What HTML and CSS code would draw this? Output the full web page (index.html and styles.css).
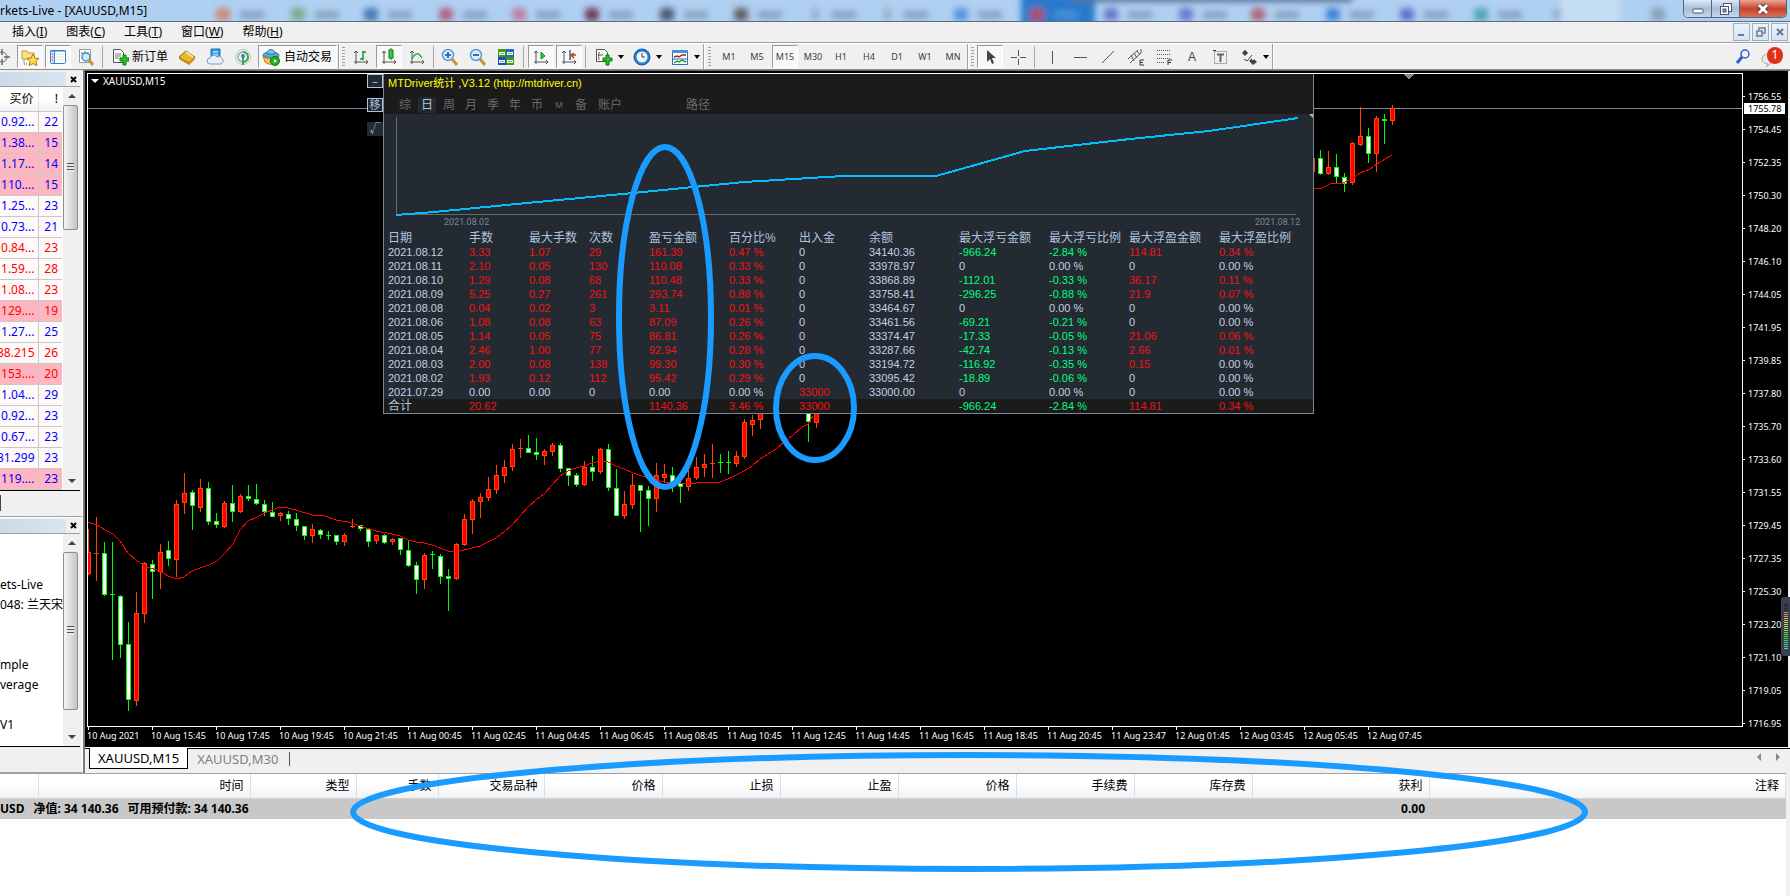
FILE: index.html
```html
<!DOCTYPE html>
<html lang="zh-CN">
<head>
<meta charset="utf-8">
<title>Markets-Live - [XAUUSD,M15]</title>
<link rel="stylesheet" href="styles.css">
</head>
<body>
<header class="titlebar">
  <svg class="glass" aria-hidden="true">
    <defs>
      <filter id="soft" x="-20%" y="-40%" width="140%" height="180%"><feGaussianBlur stdDeviation="3"/></filter>
    </defs>
    <g id="glass-tabs" filter="url(#soft)"></g>
  </svg>
  <h1 class="title">rkets-Live - [XAUUSD,M15]</h1>
  <div class="window-buttons">
    <button class="wb" aria-label="最小化"><svg width="12" height="12"><rect x="1" y="6" width="10" height="4" rx="1" fill="#fff" stroke="#4a5670"/></svg></button>
    <button class="wb" aria-label="还原"><svg width="14" height="14"><rect x="4.500" y="1.500" width="8" height="8" fill="#fff" stroke="#4a5670"/><rect x="1.500" y="4.500" width="8" height="8" fill="#fff" stroke="#4a5670"/><rect x="4" y="7" width="3" height="3" fill="#8ea4c0" stroke="#4a5670"/></svg></button>
    <button class="wb wb-close" aria-label="关闭"><svg width="14" height="12"><path d="M3 2l8 8M11 2l-8 8" stroke="#5b3434" stroke-width="5"/><path d="M3 2l8 8M11 2l-8 8" stroke="#fff" stroke-width="3"/></svg></button>
  </div>
</header>

<nav class="menubar">
  <a href="#insert">插入(<u>I</u>)</a>
  <a href="#charts">图表(<u>C</u>)</a>
  <a href="#tools">工具(<u>T</u>)</a>
  <a href="#window">窗口(<u>W</u>)</a>
  <a href="#help">帮助(<u>H</u>)</a>
  <div class="mdi-buttons">
    <button aria-label="最小化图表"><svg width="12" height="12"><path d="M2 9h6" stroke="#6d7b8c" stroke-width="2"/></svg></button>
    <button aria-label="还原图表"><svg width="12" height="12"><path d="M4 4V2h6v5H8M2 5h5v5H2z" fill="none" stroke="#6d7b8c" stroke-width="1.500"/></svg></button>
    <button aria-label="关闭图表"><svg width="12" height="12"><path d="M3 3l6 6M9 3l-6 6" stroke="#6d7b8c" stroke-width="2"/></svg></button>
  </div>
</nav>

<div class="toolbar" role="toolbar">
  <div class="group group-first">
    <button class="tb" aria-label="准星"><svg width="18" height="18" fill="none" stroke="#666"><circle cx="9" cy="9" r="5"/><path d="M9 1v6M9 11v6M1 9h6M11 9h6" stroke-width="1.500"/></svg></button>
    <button class="tb on" aria-label="市场报价"><svg width="18" height="18"><path d="M1 3h5l1 2h6v6H1z" fill="#fbe08a" stroke="#c79a2c"/><path d="M3 12v4h4" fill="none" stroke="#555" stroke-dasharray="1 1"/><path d="M12 6l2 4 4 .5-3 3 .8 4L12 15.500 8.200 17.500l.8-4-3-3 4-.5z" fill="#ffd84a" stroke="#a97a12"/></svg></button>
    <button class="tb on" aria-label="导航"><svg width="18" height="18"><rect x="1.500" y="2.500" width="15" height="13" rx="1" fill="#fff" stroke="#3c7cc8"/><path d="M2 3h3v12H2z" fill="#cfe2f6"/><path d="M5.500 3v12M1 3h16" stroke="#3c7cc8"/><path d="M3 6h1M3 9h1M3 12h1" stroke="#d22"/><path d="M7 6h8M7 9h8M7 12h8" stroke="#dbe4ef"/></svg></button>
    <button class="tb" aria-label="数据窗口"><svg width="18" height="18"><path d="M2.500 1.500h11v13h-11z" fill="#fff" stroke="#999"/><path d="M4 5h2v4M8 3v5M11 4v4" fill="none" stroke="#567"/><circle cx="9" cy="9" r="4" fill="#cfe8fa" stroke="#4b8fc8" stroke-width="1.500"/><path d="M12 12l4 5" stroke="#c8962a" stroke-width="3"/></svg></button>
  </div>
  <span class="sep"></span>
  <div class="group">
    <button class="tb tb-order"><svg width="18" height="18"><path d="M2.500 1.500h7l3 3v10h-10z" fill="#fff" stroke="#555"/><path d="M4 6h6M4 8h6M4 10h4" stroke="#777"/><path d="M9 10h3V7h3v3h3v3h-3v4h-3v-4H9z" fill="#22c322" stroke="#0a7d0a"/></svg><span>新订单</span></button>
    <button class="tb" aria-label="MetaEditor"><svg width="18" height="18"><path d="M1 9l7-6 9 6-6 7z" fill="#e9b735" stroke="#9a6c0c"/><path d="M1 9l10 5 6-5v2l-6 6-10-6z" fill="#c68a15"/><path d="M8 4l7 5" stroke="#fbe39a" stroke-width="2"/></svg></button>
    <button class="tb" aria-label="虚拟主机"><svg width="18" height="18"><path d="M5 1h9v9H5z" fill="#2e9be2" stroke="#1674b8"/><path d="M7 4h5M7 7h5" stroke="#fff"/><path d="M4 16a3 3 0 010-6 4 4 0 017-1 3.500 3.500 0 014 7z" fill="#e8eff8" stroke="#7f9cc4"/></svg></button>
    <button class="tb" aria-label="信号"><svg width="18" height="18" fill="none"><circle cx="9" cy="9" r="7.500" stroke="#b7c9bb"/><circle cx="9" cy="9" r="5" stroke="#86b294" stroke-width="1.500"/><path d="M9 4a5 5 0 010 10" stroke="#3aa655" stroke-width="2"/><circle cx="9" cy="8" r="2" fill="#3e7ec0"/><path d="M9 9v8" stroke="#3aa655" stroke-width="2"/></svg></button>
    <button class="tb on tb-auto"><svg width="18" height="18"><path d="M1 8c3 3 13 3 16 0l-2 6c-3 3-9 3-12 0z" fill="#f1c64a" stroke="#b4861a"/><ellipse cx="9" cy="7" rx="8" ry="3" fill="#56a9d6" stroke="#2d7dad"/><path d="M5 6c0-6 8-6 8 0z" fill="#7cc3e8" stroke="#2d7dad"/><circle cx="13" cy="13" r="4.500" fill="#25b022" stroke="#0c780c"/><path d="M12 11l3 2-3 2z" fill="#fff"/></svg><span>自动交易</span></button>
  </div>
  <span class="edge"></span><span class="grip"></span>
  <div class="group">
    <button class="tb" aria-label="柱状图"><svg width="18" height="18" fill="none" stroke="#555"><path d="M4 3v13M2 5l2-2 2 2M2 14h14M14 12l2 2-2 2"/><path d="M11 3v9M11 4h3M8 11h3" stroke="#0a9a2a" stroke-width="1.500"/></svg></button>
    <button class="tb on" aria-label="阴阳烛"><svg width="18" height="18" fill="none" stroke="#555"><path d="M4 3v13M2 5l2-2 2 2M2 14h14M14 12l2 2-2 2"/><path d="M11 0v12" stroke="#0a7a1a"/><rect x="9" y="2" width="4" height="8" fill="#2fd04a" stroke="#0a7a1a"/></svg></button>
    <button class="tb" aria-label="折线图"><svg width="18" height="18" fill="none" stroke="#555"><path d="M4 3v13M2 5l2-2 2 2M2 14h14M14 12l2 2-2 2"/><path d="M4 11q5-10 10-1" stroke="#3aaa4a" stroke-width="1.500"/></svg></button>
  </div>
  <span class="sep sep-s"></span>
  <div class="group">
    <button class="tb" aria-label="放大"><svg width="18" height="18"><path d="M11 11l5 6" stroke="#c8962a" stroke-width="3"/><circle cx="7" cy="7" r="5.500" fill="#d9eefc" stroke="#5a9cd4" stroke-width="1.500"/><path d="M4 7h6M7 4v6" stroke="#3c6ea8" stroke-width="2"/></svg></button>
    <button class="tb" aria-label="缩小"><svg width="18" height="18"><path d="M11 11l5 6" stroke="#c8962a" stroke-width="3"/><circle cx="7" cy="7" r="5.500" fill="#d9eefc" stroke="#5a9cd4" stroke-width="1.500"/><path d="M4 7h6" stroke="#3c6ea8" stroke-width="2"/></svg></button>
    <button class="tb" aria-label="平铺"><svg width="18" height="18"><path d="M1 1h8v8H1z" fill="#3c9a1c"/><path d="M9 1h8v8H9z" fill="#2c62c4"/><path d="M1 9h8v8H1z" fill="#1c4cc0"/><path d="M9 9h8v8H9z" fill="#3c9a1c"/><path d="M2 4h6v3H2zM10 4h6v3h-6zM2 12h6v3H2zM10 12h6v3h-6z" fill="#eef6e8"/><path d="M3 5.500h4M11 5.500h4M3 13.500h4M11 13.500h4" stroke="#8ab86a"/></svg></button>
  </div>
  <span class="sep sep-l"></span>
  <div class="group">
    <button class="tb on" aria-label="自动滚动"><svg width="18" height="18" fill="none" stroke="#555"><path d="M4 3v13M2 5l2-2 2 2M2 14h14M14 12l2 2-2 2"/><path d="M9 4l4 4-4 3z" fill="#2fd04a" stroke="#0a8a1a"/></svg></button>
    <button class="tb on" aria-label="图表平移"><svg width="18" height="18" fill="none" stroke="#555"><path d="M4 3v13M2 5l2-2 2 2M2 14h14M14 12l2 2-2 2"/><path d="M10 2v10" stroke="#2a62a8" stroke-width="1.500"/><path d="M16 7h-5M14 5l-3 2 3 3" stroke="#c83a10" stroke-width="1.500"/></svg></button>
  </div>
  <span class="sep"></span>
  <div class="group">
    <button class="tb tb-drop" aria-label="指标"><svg width="18" height="18"><path d="M1.500 1.500h8l3 3v9h-11z" fill="#fff" stroke="#555"/><path d="M5 4q-2 0-1 8M3 7h5" fill="none" stroke="#555"/><path d="M8 10h3V7h3v3h3v3h-3v4h-3v-4H8z" fill="#22c322" stroke="#0a7d0a"/></svg><i class="caret"></i></button>
    <button class="tb tb-drop" aria-label="周期"><svg width="18" height="18"><circle cx="9" cy="9" r="8" fill="#2c7fd6" stroke="#1450a0"/><circle cx="9" cy="9" r="5.500" fill="#eef6fc"/><path d="M9 5v4h3" fill="none" stroke="#444"/></svg><i class="caret"></i></button>
    <button class="tb tb-drop" aria-label="模板"><svg width="18" height="18"><path d="M1.500 2.500h15v14h-15z" fill="#fff" stroke="#2c6fc0"/><path d="M1 2h16v3H1z" fill="#4a90d8"/><path d="M3 9l3-1 2 1 3-2 4 0" fill="none" stroke="#b02010" stroke-width="1.500"/><path d="M1 11h16" stroke="#2c6fc0"/><path d="M3 15l3-2 2 1 3-2 4 2" fill="none" stroke="#1a9a2a" stroke-width="1.500"/></svg><i class="caret"></i></button>
  </div>
  <span class="edge"></span><span class="grip grip-l"></span>
  <div class="group frames">
    <button class="tb">M1</button><button class="tb">M5</button><button class="tb on">M15</button><button class="tb">M30</button><button class="tb">H1</button><button class="tb">H4</button><button class="tb">D1</button><button class="tb">W1</button><button class="tb">MN</button>
  </div>
  <span class="edge"></span><span class="grip"></span>
  <div class="group">
    <button class="tb on" aria-label="光标"><svg width="18" height="18"><path d="M6 2v12l3-3 2 5 2-1-2-5h4z" fill="#444"/></svg></button>
    <button class="tb" aria-label="十字线"><svg width="18" height="18" stroke="#555"><path d="M9.500 2v6M9.500 11v6M2 9.500h6M11 9.500h6"/></svg></button>
  </div>
  <span class="sep"></span>
  <div class="group">
    <button class="tb" aria-label="垂直线"><svg width="18" height="18" stroke="#555"><path d="M9.500 3v13"/></svg></button>
    <button class="tb" aria-label="水平线"><svg width="18" height="18" stroke="#555"><path d="M3 9.500h13"/></svg></button>
    <button class="tb" aria-label="趋势线"><svg width="18" height="18" stroke="#555"><path d="M3 15L15 3"/></svg></button>
    <button class="tb" aria-label="等距通道"><svg width="18" height="18" fill="none" stroke="#555"><path d="M1 11L11 2M3 15L14 5M4 7l3 6M7 5l3 5M10 3l3 4M14 1v4"/><path d="M17 12h-4v5h4M13 14.500h3" stroke="#333"/></svg></button>
    <button class="tb" aria-label="斐波纳契"><svg width="18" height="18" fill="none" stroke="#555"><path d="M2 2.500h14M2 6.500h14M2 10.500h14M2 14.500h8" stroke-dasharray="1 1"/><path d="M13 17v-5h4M13 14.500h3" stroke="#333"/></svg></button>
    <button class="tb tb-letter" aria-label="文字">A</button>
    <button class="tb" aria-label="文字标签"><svg width="18" height="18" fill="none" stroke="#666"><path d="M3.500 3.500h12v12h-12z" stroke-dasharray="1 1"/><path d="M2 2.500h3" stroke="#333"/><path d="M6 6.500h7M9.500 6v8" stroke-width="2"/></svg></button>
    <button class="tb tb-drop" aria-label="箭头"><svg width="18" height="18" fill="#444"><path d="M5 2l3 3-2 0v2H4V5H2z"/><path d="M2 5l3-3 3 3-3 3z"/><path d="M9 13l3-3v2h2v-1l3 3-4 3z"/><path d="M4 11l3 2 5-6" fill="none" stroke="#444"/></svg><i class="caret"></i></button>
  </div>
  <span class="edge"></span>
  <div class="toolbar-right">
    <button class="tb" aria-label="搜索"><svg width="18" height="18" fill="none" stroke="#2a5fd0"><circle cx="10" cy="6" r="4" stroke-width="1.500"/><path d="M7 9l-5 6" stroke-width="3"/></svg></button>
    <button class="tb tb-bell" aria-label="消息"><svg width="18" height="20"><path d="M8 7a6 5 0 100 10l-2 3 5-4a5 5 0 00-3-9z" fill="#e9e9ee" stroke="#aaa"/></svg><span class="badge">1</span></button>
  </div>
</div>

<main class="workspace">
  <aside class="dock">
    <section class="market">
      <div class="dock-head"><span class="dock-title"></span><button class="dock-close" aria-label="关闭"><svg width="7" height="7"><path d="M1 1l5 5M6 1L1 6" stroke="#000" stroke-width="2"/></svg></button></div>
      <div class="dock-body">
        <table class="quotes">
          <colgroup><col class="q-price"><col class="q-spread"></colgroup>
          <thead><tr><th>买价</th><th>!</th></tr></thead>
          <tbody>
            <tr><td><span>0.92...</span></td><td>22</td></tr>
            <tr class="hot"><td><span>1.38...</span></td><td>15</td></tr>
            <tr class="hot"><td><span>1.17...</span></td><td>14</td></tr>
            <tr class="hot"><td><span>110....</span></td><td>15</td></tr>
            <tr><td><span>1.25...</span></td><td>23</td></tr>
            <tr><td><span>0.73...</span></td><td>21</td></tr>
            <tr class="fall"><td><span>0.84...</span></td><td>23</td></tr>
            <tr class="fall"><td><span>1.59...</span></td><td>28</td></tr>
            <tr class="fall"><td><span>1.08...</span></td><td>23</td></tr>
            <tr class="fall hot"><td><span>129....</span></td><td>19</td></tr>
            <tr><td><span>1.27...</span></td><td>25</td></tr>
            <tr class="fall"><td><span>38.215</span></td><td>26</td></tr>
            <tr class="fall hot"><td><span>153....</span></td><td>20</td></tr>
            <tr><td><span>1.04...</span></td><td>29</td></tr>
            <tr><td><span>0.92...</span></td><td>23</td></tr>
            <tr><td><span>0.67...</span></td><td>23</td></tr>
            <tr><td><span>31.299</span></td><td>23</td></tr>
            <tr class="hot"><td><span>119....</span></td><td>23</td></tr>
          </tbody>
        </table>
        <div class="scroll"><button class="up" aria-label="向上"></button><div class="track track-a"><div class="thumb"></div></div><button class="down" aria-label="向下"></button></div>
      </div>
      <div class="dock-tabs"><span class="dock-tab"></span></div>
    </section>
    <section class="navigator">
      <div class="dock-head"><span class="dock-title"></span><button class="dock-close" aria-label="关闭"><svg width="7" height="7"><path d="M1 1l5 5M6 1L1 6" stroke="#000" stroke-width="2"/></svg></button></div>
      <div class="dock-body">
        <ul class="tree">
          <li></li><li></li><li>ets-Live</li><li>048: 兰天宋</li><li></li><li></li><li>mple</li><li>verage</li><li></li><li>V1</li>
        </ul>
        <div class="scroll"><button class="up" aria-label="向上"></button><div class="track track-b"><div class="thumb"></div></div><button class="down" aria-label="向下"></button></div>
      </div>
      <div class="dock-tabs"></div>
    </section>
  </aside>

  <section class="charts">
    <div class="chart-window">
      <div class="plot">
        <svg class="candles"><path class="bid-line" d="M0 34.500h4000"/><g id="bars"></g><path class="shift-mark" d="M1316 0h10l-5 6z"/><g id="average"></g></svg>
        <div class="chart-name"><i class="caret caret-w"></i>XAUUSD,M15</div>

        <div class="side-buttons">
          <button class="framed" aria-label="折叠">–</button>
          <button class="framed">移</button>
          <button>√</button>
        </div>
        <div class="stats">
          <div class="stats-head">
            <div class="stats-title">MTDriver统计 ,V3.12 (http://mtdriver.cn)</div>
            <div class="stats-tabs">
              <button>综</button><button class="sel">日</button><button>周</button><button>月</button><button>季</button><button>年</button><button>币</button><button class="mini">M</button><button>备</button><button class="wide">账户</button><button class="wide path">路径</button>
            </div>
          </div>
          <svg class="equity">
            <path d="M12.500 3v97M12 100.500h900" stroke="#696969" fill="none"/>
            <path d="M12 101L50 98 143 89 249 79 360 68 459 62H552L641 37 746 25 825 17 914 4" stroke="#00bfff" stroke-width="2" fill="none" shape-rendering="crispEdges"/>
            <path d="M929 0l-4 0 4 4z" fill="#b8b8b8"/>
            <text x="60" y="111">2021.08.02</text><text x="871" y="111">2021.08.12</text>
          </svg>
          <table class="days">
            <colgroup><col class="w84"><col class="w60"><col class="w60"><col class="w60"><col class="w80"><col class="w70"><col class="w70"><col class="w90"><col class="w90"><col class="w80"><col class="w90"><col></colgroup>
            <thead><tr><th>日期</th><th>手数</th><th>最大手数</th><th>次数</th><th>盈亏金额</th><th>百分比%</th><th>出入金</th><th>余额</th><th>最大浮亏金额</th><th>最大浮亏比例</th><th>最大浮盈金额</th><th>最大浮盈比例</th></tr></thead>
            <tbody>
              <tr><td>2021.08.12</td><td class="r">3.33</td><td class="r">1.07</td><td class="r">29</td><td class="r">161.39</td><td class="r">0.47 %</td><td>0</td><td>34140.36</td><td class="g">-966.24</td><td class="g">-2.84 %</td><td class="r">114.81</td><td class="r">0.34 %</td></tr>
              <tr><td>2021.08.11</td><td class="r">2.10</td><td class="r">0.05</td><td class="r">130</td><td class="r">110.08</td><td class="r">0.33 %</td><td>0</td><td>33978.97</td><td>0</td><td>0.00 %</td><td>0</td><td>0.00 %</td></tr>
              <tr><td>2021.08.10</td><td class="r">1.29</td><td class="r">0.08</td><td class="r">68</td><td class="r">110.48</td><td class="r">0.33 %</td><td>0</td><td>33868.89</td><td class="g">-112.01</td><td class="g">-0.33 %</td><td class="r">36.17</td><td class="r">0.11 %</td></tr>
              <tr><td>2021.08.09</td><td class="r">5.25</td><td class="r">0.27</td><td class="r">261</td><td class="r">293.74</td><td class="r">0.88 %</td><td>0</td><td>33758.41</td><td class="g">-296.25</td><td class="g">-0.88 %</td><td class="r">21.9</td><td class="r">0.07 %</td></tr>
              <tr><td>2021.08.08</td><td class="r">0.04</td><td class="r">0.02</td><td class="r">3</td><td class="r">3.11</td><td class="r">0.01 %</td><td>0</td><td>33464.67</td><td>0</td><td>0.00 %</td><td>0</td><td>0.00 %</td></tr>
              <tr><td>2021.08.06</td><td class="r">1.08</td><td class="r">0.08</td><td class="r">63</td><td class="r">87.09</td><td class="r">0.26 %</td><td>0</td><td>33461.56</td><td class="g">-69.21</td><td class="g">-0.21 %</td><td>0</td><td>0.00 %</td></tr>
              <tr><td>2021.08.05</td><td class="r">1.14</td><td class="r">0.05</td><td class="r">75</td><td class="r">86.81</td><td class="r">0.26 %</td><td>0</td><td>33374.47</td><td class="g">-17.33</td><td class="g">-0.05 %</td><td class="r">21.06</td><td class="r">0.06 %</td></tr>
              <tr><td>2021.08.04</td><td class="r">2.46</td><td class="r">1.00</td><td class="r">77</td><td class="r">92.94</td><td class="r">0.28 %</td><td>0</td><td>33287.66</td><td class="g">-42.74</td><td class="g">-0.13 %</td><td class="r">2.66</td><td class="r">0.01 %</td></tr>
              <tr><td>2021.08.03</td><td class="r">2.00</td><td class="r">0.08</td><td class="r">138</td><td class="r">99.30</td><td class="r">0.30 %</td><td>0</td><td>33194.72</td><td class="g">-116.92</td><td class="g">-0.35 %</td><td class="r">0.15</td><td>0.00 %</td></tr>
              <tr><td>2021.08.02</td><td class="r">1.93</td><td class="r">0.12</td><td class="r">112</td><td class="r">95.42</td><td class="r">0.29 %</td><td>0</td><td>33095.42</td><td class="g">-18.89</td><td class="g">-0.06 %</td><td>0</td><td>0.00 %</td></tr>
              <tr><td>2021.07.29</td><td>0.00</td><td>0.00</td><td>0</td><td>0.00</td><td>0.00 %</td><td class="r">33000</td><td>33000.00</td><td>0</td><td>0.00 %</td><td>0</td><td>0.00 %</td></tr>
            </tbody>
            <tfoot><tr><th>合计</th><td class="r">20.62</td><td></td><td></td><td class="r">1140.36</td><td class="r">3.46 %</td><td class="r">33000</td><td></td><td class="g">-966.24</td><td class="g">-2.84 %</td><td class="r">114.81</td><td class="r">0.34 %</td></tr></tfoot>
          </table>
        </div>
      </div>
      <div class="prices">
        <span>1756.55</span><span>1754.45</span><span>1752.35</span><span>1750.30</span><span>1748.20</span><span>1746.10</span><span>1744.05</span><span>1741.95</span><span>1739.85</span><span>1737.80</span><span>1735.70</span><span>1733.60</span><span>1731.55</span><span>1729.45</span><span>1727.35</span><span>1725.30</span><span>1723.20</span><span>1721.10</span><span>1719.05</span><span>1716.95</span>
        <b class="bid">1755.78</b>
      </div>
      <div class="times">
        <span>10 Aug 2021</span><span>10 Aug 15:45</span><span>10 Aug 17:45</span><span>10 Aug 19:45</span><span>10 Aug 21:45</span><span>11 Aug 00:45</span><span>11 Aug 02:45</span><span>11 Aug 04:45</span><span>11 Aug 06:45</span><span>11 Aug 08:45</span><span>11 Aug 10:45</span><span>11 Aug 12:45</span><span>11 Aug 14:45</span><span>11 Aug 16:45</span><span>11 Aug 18:45</span><span>11 Aug 20:45</span><span>11 Aug 23:47</span><span>12 Aug 01:45</span><span>12 Aug 03:45</span><span>12 Aug 05:45</span><span>12 Aug 07:45</span>
      </div>
    </div>
    <div class="chart-tabs">
      <button class="chart-tab current">XAUUSD,M15</button>
      <button class="chart-tab">XAUUSD,M30</button>
      <div class="tab-arrows"><button class="left" aria-label="向左"></button><button class="right" aria-label="向右"></button></div>
    </div>
  </section>
</main>

<section class="terminal">
  <table class="orders">
    <colgroup><col class="c39"><col class="c212"><col class="c106"><col class="c82"><col class="c106"><col class="c118"><col class="c118"><col class="c118"><col class="c118"><col class="c118"><col class="c118"><col class="c177"><col></colgroup>
    <thead><tr><th></th><th>时间</th><th>类型</th><th>手数</th><th>交易品种</th><th>价格</th><th>止损</th><th>止盈</th><th>价格</th><th>手续费</th><th>库存费</th><th>获利</th><th>注释</th></tr></thead>
    <tbody><tr><td colspan="11" class="balance"><span>USD</span><span>净值: 34 140.36</span><span>可用预付款: 34 140.36</span></td><td>0.00</td><td></td></tr></tbody>
  </table>
</section>

<div class="meter" id="meter"></div>
<svg class="marks" aria-hidden="true">
  <ellipse cx="665" cy="317" rx="46" ry="170"/>
  <ellipse cx="815" cy="408" rx="39" ry="52"/>
  <ellipse cx="969" cy="812" rx="616" ry="57"/>
</svg>
<script src="chart.js"></script>
</body>
</html>
```

FILE: styles.css
```css
* { box-sizing: border-box; }
body {
  margin: 0; height: 100vh; overflow: hidden; position: relative;
  display: flex; flex-direction: column;
  background: #f0f0f0; color: #000;
  font: 12px/16px "Noto Sans", "Noto Sans CJK SC", sans-serif;
}
button { border: 0; padding: 0; margin: 0; background: none; font: inherit; color: inherit; }
table { border-collapse: collapse; table-layout: fixed; }
th, td { padding: 0; font-weight: normal; white-space: nowrap; }

/* title bar */
.titlebar { position: relative; flex: none; display: flex; justify-content: space-between; height: 22px; border-bottom: 1px solid #5d6b80; background: #b0d0f2; overflow: hidden; }
.glass { position: absolute; inset: 0; width: 100%; height: 100%; }
.title { position: relative; margin: 0; font: 12px/21px "Noto Sans", sans-serif; }
.window-buttons { position: relative; display: flex; height: 18px; margin-right: 3px; border: 1px solid #56657a; border-top: 0; border-radius: 0 0 5px 5px; overflow: hidden; }
.wb { width: 28px; display: flex; align-items: center; justify-content: center; background: linear-gradient(#dce8f5, #a9bfd8 50%, #c3d8ee); border-right: 1px solid #56657a; }
.wb-close { width: 46px; border-right: 0; background: linear-gradient(#e8a797, #c8432c 50%, #d9705a); }

/* menu */
.menubar { flex: none; display: flex; align-items: center; gap: 19px; height: 21px; padding-left: 12px; border-bottom: 1px solid #a0a0a0; }
.menubar a { color: #000; text-decoration: none; }
.mdi-buttons { margin-left: auto; display: flex; gap: 2px; padding-right: 2px; }
.mdi-buttons button { width: 17px; height: 18px; display: flex; align-items: center; justify-content: center; border: 1px solid #9fb0c2; background: linear-gradient(#e9f3fc, #d3e4f5); }

/* toolbar */
.toolbar { flex: none; display: flex; align-items: center; height: 27px; border-top: 1px solid #fff; border-bottom: 1px solid #8c8c8c; overflow: hidden; }
.group { display: flex; flex: none; }
.group-first { margin-left: -12px; }
.tb { position: relative; width: 26px; height: 23px; margin: 0 1px; display: flex; align-items: center; justify-content: center; flex: none; border: 1px solid transparent; }
.tb.on { background: #f8f8f8; border-color: #9a9a9a #fff #fff #9a9a9a; }
.tb-order { width: 65px; justify-content: flex-start; gap: 3px; padding-left: 3px; }
.tb-auto { width: 79px; gap: 4px; justify-content: flex-start; padding-left: 3px; }
.tb-drop { width: 38px; margin: 0; justify-content: flex-start; gap: 5px; padding-left: 5px; }
.tb-letter { font: 12px "Liberation Sans", sans-serif; color: #444; }
.frames .tb { font-size: 9px; color: #3c3c3c; }
.caret { width: 0; height: 0; border: 3px solid transparent; border-top: 4px solid #000; border-bottom: 0; }
.sep { flex: none; width: 1px; height: 22px; margin: 0 3px 0 2px; background: #a8a8a8; }
.sep-s { margin: 0 2px; }
.sep-l { margin: 0 3px; }
.edge { flex: none; width: 2px; height: 26px; background: #a0a0a0; border-right: 1px solid #fff; }
.grip { flex: none; width: 3px; height: 20px; margin: 0 2px; background: repeating-linear-gradient(#a0a0a0 0 1px, #f0f0f0 1px 3px); }
.grip-l { margin: 0 4px 0 3px; }
.toolbar-right { margin-left: auto; display: flex; padding-right: 4px; }
.tb-bell { justify-content: flex-start; }
.badge { position: absolute; right: 1px; top: 1px; width: 16px; height: 17px; border-radius: 8px; background: #e0301c; color: #fff; text-align: center; line-height: 16px; }

/* docked panels */
.workspace { flex: 1; min-height: 0; display: flex; }
.dock { flex: none; width: 83px; display: flex; flex-direction: column; padding-top: 2px; }
.market { flex: none; border-bottom: 1px solid #a0a0a0; border-right: 1px solid #fff; }
.navigator { flex: 1; min-height: 0; display: flex; flex-direction: column; padding-top: 1px; border-top: 1px solid #fff; border-right: 1px solid #fff; border-bottom: 1px solid #a0a0a0; }
.dock-head { flex: none; display: flex; height: 15px; margin-right: 2px; border-bottom: 1px solid #a0a0a0; }
.dock-title { width: 66px; background: linear-gradient(90deg, #ccdae8, #d8e6f3); }
.dock-close { width: 14px; display: flex; align-items: center; justify-content: center; }
.dock-body { display: flex; flex: 1; min-height: 0; margin-right: 2px; border-bottom: 1px solid #000; background: #fff; }
.quotes { flex: none; width: 62px; background: #fffafa; color: #00f; }
.q-price { width: 38px; }
.q-spread { width: 24px; }
.quotes th { height: 24px; padding-right: 4px; text-align: right; color: #000; background: linear-gradient(#fff 50%, #f0f2f5); border-right: 1px solid #dcdfe3; border-bottom: 1px solid #c8c8c8; }
.quotes td { height: 21px; padding-right: 3px; line-height: 20px; text-align: right; border-right: 1px solid #c8c8c8; border-bottom: 1px solid #c8c8c8; }
.quotes td + td, .quotes th + th { border-right: 0; padding-right: 4px; }
.quotes span { display: flex; justify-content: flex-end; }
.hot { background: #ffb6c1; }
.fall { color: #f00; }
.scroll { width: 17px; margin-left: auto; display: flex; flex-direction: column; background: #f0f0f0; }
.scroll button { height: 18px; display: flex; align-items: center; justify-content: center; }
.up::before, .down::before { content: ""; border: 4px solid transparent; }
.up::before { border-bottom-color: #444; border-top: 0; }
.down::before { border-top-color: #444; border-bottom: 0; }
.track { flex: 1; display: flex; flex-direction: column; padding-right: 2px; }
.thumb { border: 1px solid #8f8f8f; border-radius: 2px; background: linear-gradient(90deg, #f4f4f4, #dcdcdc 50%, #c4c4c4); display: flex; align-items: center; justify-content: center; }
.thumb::before { content: ""; width: 7px; height: 9px; background: repeating-linear-gradient(#555 0 1px, #e8e8e8 1px 3px); }
.track-a .thumb { height: 34%; }
.track-b .thumb { height: 90%; }
.dock-tabs { flex: none; height: 25px; padding-top: 4px; }
.dock-tab { display: block; width: 1px; height: 16px; background: #444; }
.tree { flex: 1; margin: 0; padding: 1px 0 0; list-style: none; overflow: hidden; white-space: nowrap; }
.tree li { height: 20px; line-height: 20px; }

/* chart */
.charts { flex: 1; min-width: 0; display: flex; flex-direction: column; border-left: 2px solid #7a7a7a; border-top: 1px solid #696969; }
.chart-window { flex: 1; min-height: 0; display: grid; grid-template: minmax(0, 1fr) 20px / minmax(0, 1fr) 45px; margin-right: 2px; padding: 2px 0 0 2px; background: #000; color: #fff; font-size: 9px; line-height: 12px; }
.plot { position: relative; border: 1px solid #fff; }
.candles { position: absolute; inset: 0; width: 100%; height: 100%; shape-rendering: crispEdges; }
.bid-line { stroke: #778899; }
.shift-mark { fill: #778899; }
.bull rect { fill: #f00; stroke: #ff4500; }
.bear rect { fill: #fff; stroke: #0f0; }
.bull path { stroke: #ff4500; }
.bear path { stroke: #0f0; }
.average { fill: none; stroke: #f00; }
.chart-name { position: absolute; left: 3px; top: 0; display: flex; align-items: center; gap: 4px; font-size: 10px; line-height: 14px; }
.caret-w { border-top-color: #fff; border-width: 4px 4px 0; }
.prices { position: relative; padding-top: 7px; }
.prices span { display: flex; align-items: center; gap: 3px; height: 33px; }
.prices span::before { content: ""; width: 2px; height: 1px; background: #fff; }
.bid { position: absolute; left: 1px; right: 3px; top: 30px; height: 11px; padding-left: 4px; font-weight: normal; line-height: 11px; background: #fff; color: #000; }
.times { grid-column: 1 / -1; display: flex; overflow: hidden; }
.times span { position: relative; flex: none; width: 64px; padding-top: 3px; white-space: nowrap; }
.times span::before { content: ""; position: absolute; left: 1px; top: 0; width: 1px; height: 3px; background: #fff; }

.side-buttons { position: absolute; left: 279px; top: 0; display: flex; flex-direction: column; gap: 10px; }
.side-buttons button { width: 16px; height: 14px; background: #242a32; color: #b0c4de; font-size: 11px; line-height: 12px; border: 1px solid #242a32; }
.side-buttons .framed { border-color: #b0c4de; }

.stats { position: absolute; left: 295px; top: 0; width: 931px; border: 1px solid #778899; border-top: 0; background: #242a32; color: #c3d0e4; font: 11px/14px "Liberation Sans", "Noto Sans CJK SC", sans-serif; }
.stats-head { height: 40px; background: #1b1b1b; }
.stats-title { padding: 1px 4px 6px; color: #ff0; line-height: 16px; }
.stats-tabs { display: flex; padding-left: 12px; color: #6a6a6a; font-size: 12px; }
.stats-tabs button { width: 18px; height: 16px; margin-right: 4px; line-height: 16px; border-radius: 2px; }
.stats-tabs .sel { background: #242a32; color: #b0c4de; }
.stats-tabs .mini { font-size: 9px; }
.stats-tabs .wide { width: 24px; margin-left: 4px; }
.stats-tabs .path { margin-left: 60px; }
.equity { display: block; width: 100%; height: 117px; fill: #778899; font: 9px "Roboto", sans-serif; }
.days { width: 100%; text-align: left; }
.days th { font-size: 12px; color: #b0c4de; overflow: visible; }
.days th, .days td { height: 14px; line-height: 14px; }
.days th:first-child, .days td:first-child { padding-left: 4px; }
.days tfoot { background: #1b1b1b; }
.days .r { color: #f01414; }
.days .g { color: #00ff7f; }
.w84 { width: 85px; }
.w60 { width: 60px; }
.w70 { width: 70px; }
.w80 { width: 80px; }
.w90 { width: 90px; }

.chart-tabs { flex: none; display: flex; align-items: flex-start; height: 26px; padding-left: 4px; border-top: 1px solid #fff; box-shadow: inset 0 1px #000; font-size: 13px; }
.chart-tab { height: 21px; padding: 0 8px; color: #808080; line-height: 20px; }
.chart-tab.current { color: #000; background: #fff; border: 1px solid #000; border-top: 0; }
.chart-tab:nth-child(2) { height: 14px; margin-top: 4px; line-height: 12px; border-right: 1px solid #555; padding: 0 11px 0 9px; }
.tab-arrows { margin-left: auto; display: flex; gap: 15px; padding: 5px 10px 0 0; }
.tab-arrows button { width: 0; height: 0; border: 4px solid transparent; }
.tab-arrows .left { border-right-color: #888; border-left: 0; }
.tab-arrows .right { border-left-color: #888; border-right: 0; }

/* terminal */
.terminal { flex: none; min-height: 123px; margin-right: 4px; border-top: 1px solid #a0a0a0; background: #fff; }
.orders { width: 100%; text-align: right; }
.orders th { height: 24px; padding: 0 6px 0 0; background: linear-gradient(#fff 40%, #eff1f4); border-right: 1px solid #dcdfe3; border-bottom: 1px solid #d0d0d0; }
.orders td { height: 21px; padding-right: 4px; font-weight: bold; background: #c8c8c8; }
.orders .balance { text-align: left; }
.balance span { margin-right: 9px; }
.c39 { width: 38px; }
.c82 { width: 82px; }
.c106 { width: 106px; }
.c118 { width: 118px; }
.c177 { width: 177px; }
.c212 { width: 212px; }

/* overlays */
.meter { position: absolute; right: 0; top: 597px; width: 9px; height: 59px; padding: 7px 2px 0 3px; background: #3a4050; border-radius: 3px 0 0 3px; display: flex; flex-direction: column; gap: 1px; }
.meter i { height: 1px; }
.marks { position: absolute; inset: 0; width: 100%; height: 100%; pointer-events: none; fill: none; stroke: #1a9bff; stroke-width: 6; }
```

FILE: chart.js
```js
const NS = 'http://www.w3.org/2000/svg';
function add(parent, name, attrs) {
  const node = document.createElementNS(NS, name);
  for (const key in attrs) node.setAttribute(key, attrs[key]);
  parent.appendChild(node);
  return node;
}

/* Bars are [direction, high, low, bodyTop, bodyBottom] in thirds of a pixel below `base`. */
const STEP = 8;
const series = [
  { first: 0, base: 406, bars: [
    ['r',147,285,216,282],['r',111,303,220,220],['g',186,350,219,345],['g',186,540,343,346],['g',346,534,348,497],
    ['g',426,693,492,662],['r',336,678,400,665],['r',246,429,249,402],['g',240,357,252,278],['r',192,327,216,278],
    ['g',183,258,212,237],['r',60,291,72,240],['r',-21,102,39,71],['g',30,150,38,80],['r',-3,96,24,84],
    ['g',6,135,24,126],['g',99,144,123,137],['r',63,144,69,141],['g',15,126,69,98],['r',42,99,48,98],
    ['g',15,63,48,59],['g',12,75,57,74],['g',60,108,72,98],['g',66,111,96,111],['r',97,123,99,109],
    ['g',93,135,102,119],['g',99,153,117,140],['g',138,180,139,170],['r',132,189,147,170],['g',147,177,150,167],
    ['g',153,180,166,166],['g',165,195,165,186],['r',159,198,165,186],['r',117,144,139,139],['g',135,153,137,149],
    ['g',144,201,147,186],['r',165,192,166,183],['g',162,192,165,189],['r',174,195,178,188],['g',174,225,176,212]] },
  { first: 40, base: 326, bars: [
    ['g',423,501,450,498],['g',486,582,495,540],['r',459,567,465,540],['g',453,507,463,466],['g',462,552,468,531],
    ['g',507,633,528,537],['r',429,540,432,537],['r',342,438,357,435],['r',297,402,303,360],['r',279,354,291,308],
    ['r',231,303,267,294],['r',195,282,225,272],['r',180,249,201,228],['r',132,213,147,201],['r',117,174,145,145],
    ['g',105,159,144,159],['g',114,180,156,167],['r',147,195,153,168],['r',129,168,135,156],['g',129,216,135,207],
    ['g',204,258,205,228],['g',219,261,225,255],['r',183,258,201,255],['g',168,243,201,216],['r',144,222,147,216],
    ['g',132,273,147,264],['g',207,348,264,348],['r',273,357,312,348],['r',222,327,255,315],['g',255,396,255,273],
    ['g',258,378,270,297],['r',189,336,225,297],['r',192,246,222,234],['g',201,276,225,249],['g',240,309,250,262],
    ['r',207,273,234,261],['r',171,240,201,234],['r',162,231,192,204],['r',132,234,190,190],['g',162,219,188,188],
    ['g',153,222,188,188],['r',153,201,168,192],['r',57,177,66,171],['r',45,108,60,75],['r',30,87,30,60]] },
  { first: 90, base: 326, bars: [['g',30,126,20,66],['r',30,84,20,69]] },
  { first: 153, base: -74, bars: [
    ['r',475,518,475,518],['g',450,525,475,524],['r',453,527,501,522],['g',462,550,501,533],['g',519,576,531,554],
    ['r',427,557,430,551],['r',321,438,408,435],['g',384,489,408,464],['r',348,516,354,464],['g',342,432,357,365],
    ['r',315,375,325,365]] }
];
const bars = document.getElementById('bars');
for (const s of series) {
  s.bars.forEach(([dir, high, low, top, bottom], n) => {
    const x = (s.first + n) * STEP;
    const y = v => Math.floor(s.base + v / 3);
    const g = add(bars, 'g', { class: dir === 'r' ? 'bull' : 'bear' });
    add(g, 'path', { d: `M${x + .5} ${y(high)}V${y(low)}` });
    const h = y(bottom) - y(top) - 1;
    if (h < 1) add(g, 'path', { d: `M${x - 2} ${y(top) + .5}h5` });
    else add(g, 'rect', { x: x - 1.5, y: y(top) + .5, width: 4, height: h });
  });
}

/* Moving average, [x, y] in thirds of a pixel from each run's origin. */
const runs = [
  { ox: -88, oy: 406, pts: [[265,127],[290,136],[315,151],[338,163],[360,183],[385,218],[410,244],[440,260],[480,272],[505,289],[530,298],[553,290],[577,274],[600,263],[628,255],[650,242],[675,220],[698,192],[721,149],[745,124],[770,110],[800,97],[841,82],[865,84],[889,90],[937,104],[975,109],[1009,119],[1045,125],[1081,138],[1129,152],[1177,163],[1200,169]] },
  { ox: 312, oy: 326, pts: [[1,409],[25,419],[49,427],[73,430],[97,436],[121,445],[145,452],[169,455],[193,451],[217,445],[241,437],[265,427],[289,413],[313,397],[337,375],[361,349],[385,322],[409,300],[433,281],[457,254],[481,229],[505,213],[529,205],[553,199],[577,190],[601,184],[625,186],[649,199],[673,208],[700,218],[745,233],[793,247],[841,250],[889,249],[913,246],[937,249],[961,247],[985,236],[1009,226],[1033,214],[1057,197],[1081,178],[1105,162],[1129,148],[1153,127],[1180,104],[1205,82],[1225,72],[1240,48]] },
  { ox: 1226, oy: -74, pts: [[0,568],[24,564],[48,553],[87,549],[117,533],[138,520],[168,507],[190,491],[213,478],[234,465]] }
];
for (const r of runs) {
  add(document.getElementById('average'), 'polyline', {
    class: 'average',
    points: r.pts.map(([x, y]) => `${Math.round(r.ox + x / 3)},${Math.round(r.oy + y / 3)}`).join(' ')
  });
}

/* Tabs showing through the glass title bar: [x, icon colour]. */
const glass = document.getElementById('glass-tabs');
add(glass, 'rect', { x: 1021, y: -6, width: 74, height: 34, fill: '#2579cc' });
add(glass, 'rect', { x: 1069, y: -6, width: 283, height: 8, fill: '#56749a' });
add(glass, 'rect', { x: 1560, y: -6, width: 60, height: 34, fill: '#c4dcf4' });
[[223,'#d07a58'],[298,'#6fa070'],[371,'#2a62a0'],[446,'#b04a6a'],[519,'#c06a8c'],[592,'#5a1c34'],[667,'#303c4c'],
 [741,'#4c4440'],[815,'#8a9cae'],[887,'#8a9cae'],[961,'#3c86d8'],[1037,'#d03c50'],[1111,'#5a62c4'],[1186,'#5a62c4'],
 [1258,'#b04a5c'],[1333,'#1f72d0'],[1407,'#5058c0'],[1481,'#3a9aa8'],[1557,'#7d92aa'],[1658,'#7d92aa']].forEach(([x, fill], n) => {
  const faint = [8, 9, 18].includes(n);
  add(glass, 'rect', { x: x - (faint ? 3 : 7), y: 8, width: faint ? 6 : 14, height: 13, rx: 4, fill, opacity: .8 });
  if (n < 18) add(glass, 'rect', { x: x + 17, y: 11, width: 24, height: 8, fill: n === 11 ? '#5a9ad8' : '#7890aa', opacity: .7 });
});

/* Level meter, idle cells first, then orange down to teal. */
const meter = document.getElementById('meter');
for (let n = 0; n < 23; n++) {
  const cell = document.createElement('i');
  cell.style.background = n < 4 ? '#1c2230' : `hsl(${20 + (n - 4) * 8}, 65%, 55%)`;
  meter.appendChild(cell);
}
```
